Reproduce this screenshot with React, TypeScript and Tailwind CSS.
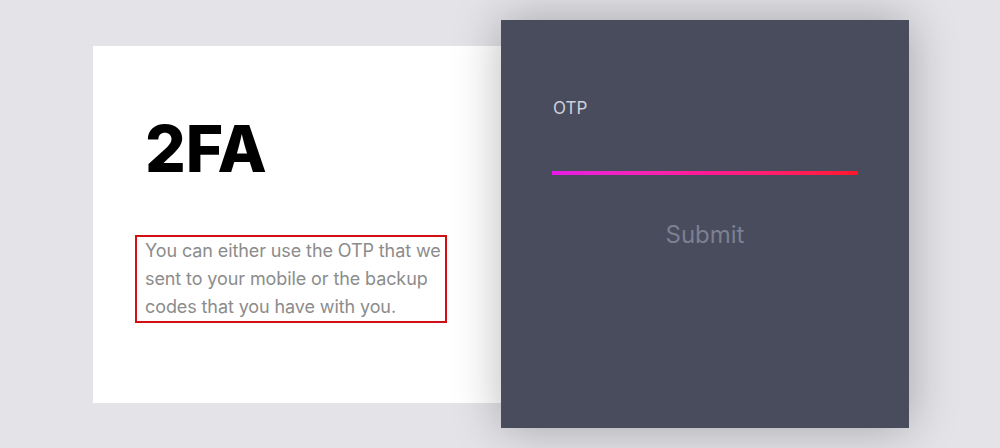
import React from "react";

export default function App() {
  return (
    <div
      className="flex h-[448px] w-full items-center bg-[#e3e3e8] pl-[93px]"
      style={{ fontFamily: "Inter, 'Noto Sans', sans-serif" }}
    >
      {/* left info card */}
      <div className="relative z-0 flex h-[357px] w-[408px] flex-col bg-white pl-[52px] pt-[71px]">
        <h1 className="text-[64px] font-extrabold leading-none text-black">
          2FA
        </h1>
        <p className="-ml-[10px] mt-[54px] w-[312px] border-2 border-[#d40f14] pl-[8px] text-[18px] leading-[28px] tracking-[-0.1px] text-[#8c8c8c]">
          You can either use the OTP that we sent to your mobile or the backup
          codes that you have with you.
        </p>
      </div>

      {/* right form card */}
      <div className="relative z-10 flex h-[408px] w-[408px] flex-col bg-[#494c5d] px-[51px] pt-[78px] shadow-[0_0_45px_rgba(0,0,0,0.28)]">
        <label className="ml-[1px] text-[17px] leading-[20px] text-[#cdd0da]">
          OTP
        </label>
        <div className="mt-[53px] h-[4px] w-full bg-gradient-to-r from-[#e61ae6] via-[#ff1993] to-[#ff1626]" />
        <button className="mt-[45px] self-center text-[24px] leading-[30px] text-[#7c8091]">
          Submit
        </button>
      </div>
    </div>
  );
}
